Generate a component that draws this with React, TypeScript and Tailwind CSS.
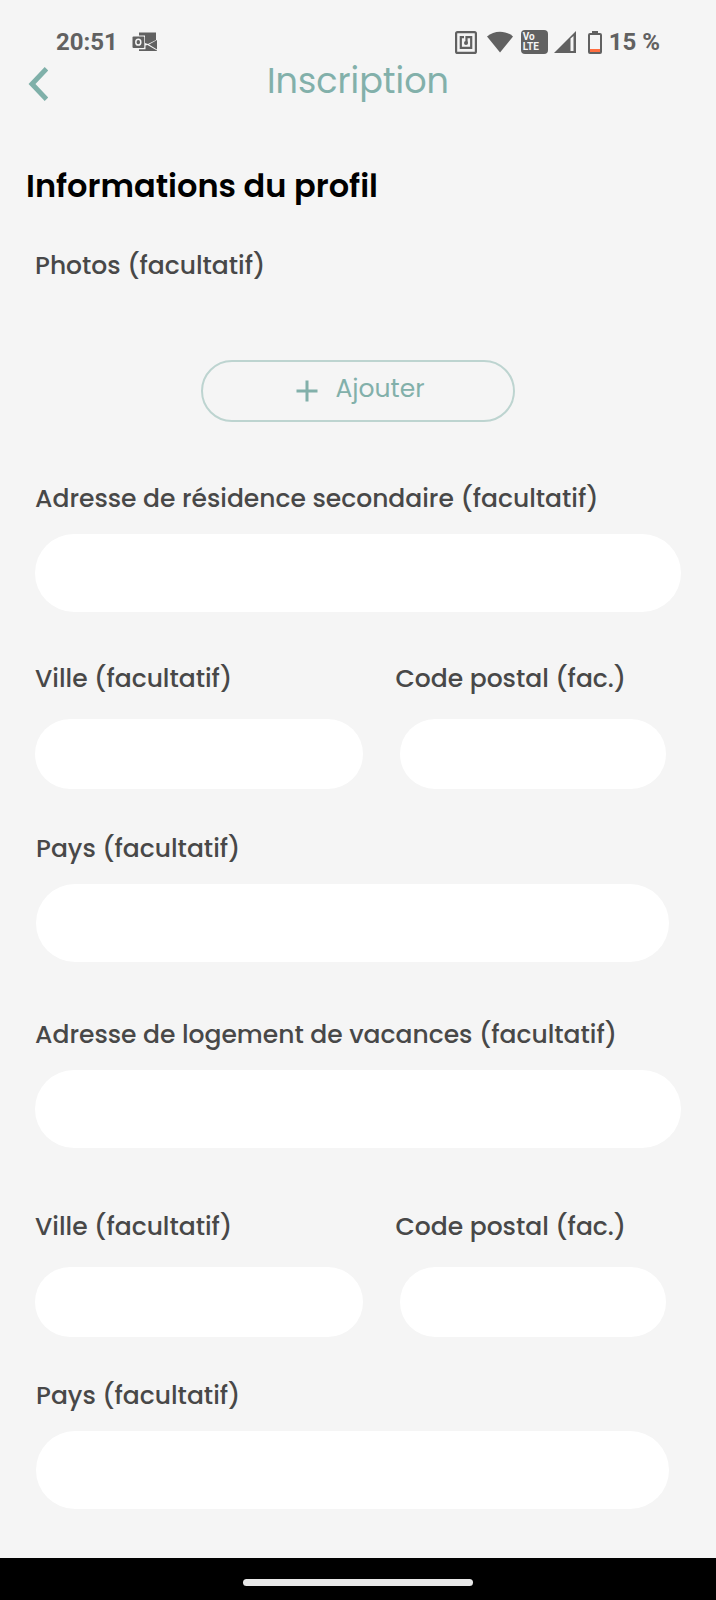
import { useId } from "react";
import { clsx } from "clsx";

function OutlookIcon() {
  return (
    <svg viewBox="0 0 26 20" className="h-5 w-[26px]" aria-hidden="true">
      <path d="M7 .5h17v7.500l-8 4-3-1V3.500H7zM25 8v9.500l-8-5zM7 17.200h6.500v-3.700l2-.5 9.500 5.500V19H7z" fill="#616161" />
      <rect x="0.500" y="4.500" width="11.800" height="11.500" rx="1" fill="#616161" />
      <ellipse cx="6.300" cy="10.200" rx="2.500" ry="2.900" fill="none" stroke="#f5f5f5" strokeWidth="1.500" />
    </svg>
  );
}

function NfcIcon() {
  return (
    <svg viewBox="0 0 22 23" className="h-[23px] w-[22px]" fill="none" stroke="#616161" aria-hidden="true">
      <rect x="1.100" y="1.100" width="19.800" height="20.800" rx="1.500" strokeWidth="2.200" />
      <path d="M9 6.200H5.800v10.600h10.400V6.200h-4.700v6" strokeWidth="2.200" />
      <circle cx="11" cy="12" r="2" fill="#616161" stroke="none" />
    </svg>
  );
}

function WifiIcon() {
  return (
    <svg viewBox="0 0 26 22" className="h-[22px] w-[26px]" aria-hidden="true">
      <path d="M13 21.500 0 5.500C7-.8 19-.8 26 5.500z" fill="#616161" />
    </svg>
  );
}

function SignalIcon() {
  return (
    <svg viewBox="0 0 22 22" className="h-[22px] w-[22px]" aria-hidden="true">
      <path d="M22 0v22H0zM16.500 7.500v12.500h3V5z" fill="#616161" fillRule="evenodd" />
    </svg>
  );
}

function BatteryIcon() {
  return (
    <svg viewBox="0 0 14 23" className="h-[23px] w-3.5" aria-hidden="true">
      <rect x="4" y="0" width="6" height="4" fill="#616161" />
      <rect x="1" y="3" width="12" height="19" rx="1" fill="none" stroke="#616161" strokeWidth="2" />
      <rect x="2" y="18" width="10" height="3" fill="#ff6e40" />
    </svg>
  );
}

function StatusBar() {
  return (
    <div className="flex h-[61px] items-center justify-between pt-[23px] pr-14 pl-14 font-['Roboto',sans-serif] text-2xl font-bold text-[#616161]">
      <div className="flex items-center gap-3.5">
        <span>20:51</span>
        <OutlookIcon />
      </div>
      <div className="flex items-center">
        <NfcIcon />
        <span className="ml-2.5">
          <WifiIcon />
        </span>
        <span className="ml-2 flex h-6 w-[27px] flex-col justify-center rounded bg-[#616161] pl-0.5 text-[10px] leading-[10px] text-[#f5f5f5]">
          <span>Vo</span>
          <span>LTE</span>
        </span>
        <span className="ml-1.5">
          <SignalIcon />
        </span>
        <span className="ml-3">
          <BatteryIcon />
        </span>
        <span className="ml-[7px]">15 %</span>
      </div>
    </div>
  );
}

function Field({ label, size = "large", inset = false }: { label: string; size?: "large" | "small"; inset?: boolean }) {
  const id = useId();
  return (
    <div className={clsx("flex flex-col", size === "large" ? "gap-[19px]" : "gap-6")}>
      <label htmlFor={id} className="text-[25px] leading-8 font-medium whitespace-nowrap">
        {label}
      </label>
      <div className={clsx("flex", inset && "pl-1")}>
        <input
          id={id}
          type="text"
          className={clsx(
            "w-full min-w-0 rounded-full bg-white px-8 text-[25px] outline-none",
            size === "large" ? "h-[78px]" : "h-[70px]"
          )}
        />
      </div>
    </div>
  );
}

function CityRow() {
  return (
    <div className="grid grid-cols-[327fr_270fr] gap-[33px] pr-[15px]">
      <Field label="Ville (facultatif)" size="small" />
      <Field label="Code postal (fac.)" size="small" inset />
    </div>
  );
}

export default function App() {
  return (
    <div className="flex min-h-screen flex-col bg-[#f5f5f5] font-['Poppins','Inter',sans-serif] text-[#484848]">
      <StatusBar />
      <header className="grid h-10 grid-cols-[1fr_auto_1fr] items-center px-7">
        <button type="button" aria-label="Retour" className="w-5 pt-1.5">
          <svg viewBox="0 0 20 34" className="h-[34px] w-5" fill="none" stroke="#7fb0a9" strokeWidth="5">
            <path d="M18.500 1.800 4 17l14.500 15.200" />
          </svg>
        </button>
        <h1 className="text-[35px] leading-10 text-[#82b0aa]">Inscription</h1>
      </header>

      <main className="flex-1 pt-[65px] pb-12">
        <h2 className="px-[26px] text-[32px] leading-10 font-semibold text-black">Informations du profil</h2>
        <form className="px-[35px] pt-11">
          <p className="text-[25px] leading-8 font-medium">Photos (facultatif)</p>
          <div className="flex justify-center pt-[78px] pb-[61px]">
            <button
              type="button"
              className="flex h-[62px] w-[314px] items-center justify-center gap-[18px] rounded-full border-2 border-[#bdd4d0] pl-1 text-[25px] text-[#82b0aa]"
            >
              <svg viewBox="0 0 22 22" className="h-[22px] w-[22px]" stroke="#82b0aa" strokeWidth="3" aria-hidden="true">
                <path d="M11 0.500v21M0.500 11h21" />
              </svg>
              <span className="pb-1">Ajouter</span>
            </button>
          </div>

          <Field label="Adresse de résidence secondaire (facultatif)" />
          <div className="pt-[51px] pb-11">
            <CityRow />
          </div>
          <div className="pr-3 pl-px">
            <Field label="Pays (facultatif)" />
          </div>

          <div className="pt-[57px]">
            <Field label="Adresse de logement de vacances (facultatif)" />
          </div>
          <div className="pt-[63px] pb-[43px]">
            <CityRow />
          </div>
          <div className="pr-3 pl-px">
            <Field label="Pays (facultatif)" />
          </div>
        </form>
      </main>

      <footer className="flex h-[42px] items-center justify-center bg-black pt-1.5">
        <div className="h-[7px] w-[230px] rounded-full bg-[#e8e8e8]" />
      </footer>
    </div>
  );
}
